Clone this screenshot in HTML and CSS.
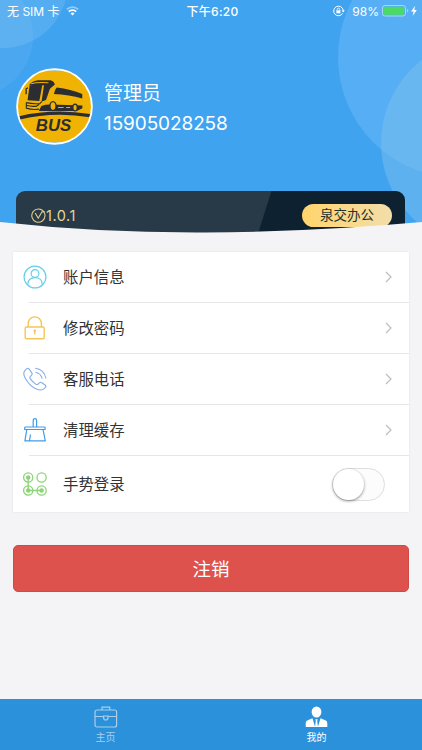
FILE: index.html
```html
<!DOCTYPE html>
<html lang="zh-CN">
<head>
<meta charset="utf-8">
<title>我的</title>
<link rel="stylesheet" href="styles.css">
</head>
<body>
<div class="app">
  <header class="hero">
    <svg class="hero-bg" viewBox="0 0 422 242" aria-hidden="true">
      <rect width="422" height="242" fill="#40a3f0"/>
      <circle cx="-28" cy="36" r="61" fill="#fff" fill-opacity=".06"/>
      <circle cx="3" cy="-17" r="65" fill="#fff" fill-opacity=".11"/>
      <circle cx="459" cy="57" r="121" fill="#5db1f6" fill-opacity=".75"/>
      <circle cx="486" cy="143" r="105" fill="#7dc1ef" fill-opacity=".48"/>
    </svg>
    <div class="status">
      <div class="status-left">
        <span>无 SIM 卡</span>
        <svg width="13" height="10" viewBox="0 0 13 10" fill="none" stroke="#fff" stroke-width="1.7"><path d="M.8 3.4a8.2 8.2 0 0 1 11.4 0" opacity=".45"/><path d="M2.8 5.6a5.3 5.3 0 0 1 7.4 0"/><path d="M6.5 9.5 4.5 7.4a2.8 2.8 0 0 1 4 0z" fill="#fff" stroke="none"/></svg>
      </div>
      <div class="status-time">下午6:20</div>
      <div class="status-right">
        <svg width="12" height="12" viewBox="0 0 12 12" fill="none" stroke="#fff"><path d="M9.6 8.4A4.8 4.8 0 1 1 10.2 5.2"/><path d="M8.6 5.2h3.2L10.2 7.4z" fill="#fff" stroke="none"/><rect x="3.4" y="5.3" width="4" height="3" fill="#fff" stroke="none"/><path d="M4.2 5.5V4.3a1.2 1.2 0 0 1 2.4 0v1.2" stroke-width=".8"/></svg>
        <span class="percent">98%</span>
        <svg width="36" height="12" viewBox="0 0 36 12"><rect x=".5" y=".5" width="23" height="10.5" rx="2.5" fill="none" stroke="#a6d6fa"/><rect x="1.7" y="1.7" width="20.6" height="8.1" rx="1.5" fill="#4cd964"/><path d="M25 4v3.5q1.3-.5 1.3-1.75T25 4z" fill="#a6d6fa"/><path d="M33.2.8 29 6.6h2.6l-1 4.5 4.2-6h-2.5z" fill="#fff"/></svg>
      </div>
    </div>
    <div class="profile">
      <svg class="avatar" viewBox="0 0 76 76">
        <defs><clipPath id="face"><circle cx="38" cy="38" r="36.2"/></clipPath></defs>
        <circle cx="38" cy="38" r="37" fill="#f0b203"/>
        <g clip-path="url(#face)">
          <path d="M18 0h40v2.8H18zM18 73.2h40V76H18z" fill="#9bd0ef"/>
          <path d="M3 47.5Q38 39.5 73 45.5v3.2Q38 42.5 3 51z" fill="#2b2d33"/>
          <path d="M13.4 17.2Q19.5 15.6 26 16.8L23 32.6 11.4 31.8z" fill="#2b2d33"/>
          <path d="M12.8 17Q16 12.6 22 12.2h12q3 .3 4.4 4.2L33.5 20.5 29.6 31.6l-4.4 1.6L27.6 17z" fill="#2b2d33"/>
          <path d="M15 15.6q6-2 17-1" fill="none" stroke="#f0b203" stroke-width="1.1"/>
          <path d="M37.4 25.6Q38 21.5 40.2 19.2 54 20.8 65.4 25.6V30q-13-3.6-28-4.4z" fill="#2b2d33"/>
          <path d="M11.8 19.5 10 20.5v5.5" fill="none" stroke="#2b2d33" stroke-width="1.3"/>
          <path d="M10.2 34.2q7 1.6 13.4.8l1.8-1.8M10.2 36.8q5 1.6 10 .8l3-2M10.2 34v5.6q6 2 12.6 1" fill="none" stroke="#2b2d33" stroke-width="1.1"/>
          <path d="M25 37.5q5-1.6 9-1.4L65.5 37v2.8L60 42.4H22.5z" fill="#2b2d33"/>
          <ellipse cx="36.5" cy="37.6" rx="3" ry="4.4" fill="#f0b203" stroke="#2b2d33" stroke-width="1.3"/>
          <ellipse cx="58.3" cy="39" rx="2.2" ry="3.3" fill="#f0b203" stroke="#2b2d33" stroke-width="1.2"/>
          <path d="M41.5 39h5.5M49.5 39h4" stroke="#f0b203"/>
          <text class="bus" x="19.5" y="62.2" textLength="35" lengthAdjust="spacingAndGlyphs">BUS</text>
        </g>
        <circle cx="38" cy="38" r="36.9" fill="none" stroke="#fff" stroke-width="1.8"/>
      </svg>
      <div class="identity">
        <div class="name">管理员</div>
        <div class="phone">15905028258</div>
      </div>
    </div>
    <div class="version-card">
      <div class="version">
        <svg width="15" height="15" viewBox="0 0 15 15" fill="none" stroke="#e2ce8c" stroke-width="1.1"><path d="M12.9 4A6.6 6.6 0 1 0 14 7.5q0-1.8-.8-3.2"/><path d="m4.2 5 3 5.2 3.8-6.4 2.8.1"/></svg>
        <span>1.0.1</span>
      </div>
      <div class="pill">泉交办公</div>
    </div>
    <svg class="wave" viewBox="0 0 422 20" aria-hidden="true"><path d="M0 0Q100 11 205 10.5T422 0V20H0z" fill="#f4f4f7"/></svg>
  </header>

  <main class="content">
    <section class="menu">
      <div class="row">
        <svg class="icon" viewBox="0 0 24 24" fill="none" stroke="#67cfe9" stroke-width="1.2"><circle cx="12" cy="12" r="10.9"/><circle cx="12" cy="8.5" r="3.9"/><path d="M5 19.5v-1.2c0-3.2 2.7-5.7 7-5.7s7 2.5 7 5.7v1.2"/></svg>
        <span class="label">账户信息</span><svg class="chevron" viewBox="0 0 7 12"><path d="m1 1 5 5-5 5"/></svg>
      </div>
      <div class="row">
        <svg class="icon" viewBox="0 0 24 24" fill="none" stroke="#f6c558" stroke-width="1.4"><rect x="2.2" y="11" width="19" height="11.8" rx="1.3"/><path d="M5.2 11V7.5a6.6 6.6 0 0 1 13.2 0V11"/><path d="M11.8 14.5v4" stroke-width="1.3"/><circle cx="11.8" cy="14.8" r="1.3" fill="#f6c558" stroke="none"/></svg>
        <span class="label">修改密码</span><svg class="chevron" viewBox="0 0 7 12"><path d="m1 1 5 5-5 5"/></svg>
      </div>
      <div class="row">
        <svg class="icon" viewBox="0 0 24 24" fill="none" stroke="#86aee8" stroke-width="1.1"><path d="M5.8 1.7Q4.8.9 3.8 1.7L1.8 3.6Q-.2 6 1.8 10.2C4.1 15 8.5 19.8 13.5 22.1q4.5 2 7.3-.2l1.6-1.6q1-1.2-.3-2.3l-3.3-2.3q-1.4-.9-2.5.2l-1.4 1.3q-1 .7-2.2-.1-3.4-2.3-5.5-5.5-.7-1.1.1-2.1l1.3-1.3q1-1 .2-2.3zM12.2 1.3q8.8.8 10.7 10.2M12.4 5.2q5.3.8 6.8 6.4"/></svg>
        <span class="label">客服电话</span><svg class="chevron" viewBox="0 0 7 12"><path d="m1 1 5 5-5 5"/></svg>
      </div>
      <div class="row">
        <svg class="icon" viewBox="0 0 24 24" fill="none" stroke="#409ce8" stroke-width="1.2" stroke-linejoin="round"><path d="M10.2 9V2.4q0-1.8 1.7-1.8t1.7 1.8V9M2.5 9h18.8q.8 0 .8.8v1.7H1.7V9.8q0-.8.8-.8zM3.8 11.5 1.9 22.8h20.4L20 11.5M7.5 16.5l-1 6"/></svg>
        <span class="label">清理缓存</span><svg class="chevron" viewBox="0 0 7 12"><path d="m1 1 5 5-5 5"/></svg>
      </div>
      <div class="row row-last">
        <svg class="icon" viewBox="0 0 24 24" fill="none" stroke="#8cd477" stroke-width="1.3"><circle cx="5.2" cy="5.5" r="4.6"/><circle cx="18.6" cy="5.5" r="4.6"/><circle cx="5.2" cy="18.5" r="4.6"/><circle cx="18.6" cy="18.5" r="4.6"/><path d="M5.2 5.5v13h13.4"/><g fill="#8cd477" stroke="none"><circle cx="5.2" cy="5.5" r="2.2"/><circle cx="5.2" cy="18.5" r="2.2"/><circle cx="18.6" cy="18.5" r="2.2"/></g></svg>
        <span class="label">手势登录</span><span class="switch"><span class="knob"></span></span>
      </div>
    </section>
    <button class="logout" type="button">注销</button>
  </main>

  <nav class="tabs">
    <div class="tab">
      <svg width="24" height="22" viewBox="0 0 24 22" fill="none" stroke="#a9cfea" stroke-width="1.2"><rect x="1" y="4" width="21.6" height="17" rx="2"/><path d="M8 4V1.2h7.8V4M1 10.5h8.6m4.4 0h8.6M9.6 10v1.8a2.2 2.2 0 0 0 4.4 0V10z"/></svg>
      <span>主页</span>
    </div>
    <div class="tab active">
      <svg width="24" height="22" viewBox="0 0 24 22" fill="#fff"><ellipse cx="11.5" cy="6" rx="4.9" ry="5.6"/><path d="M7.5 12.2 10.1 21H.7v-4q0-2 2-2.8zM15.5 12.2 12.9 21h9.4v-4q0-2-2-2.8zM10.3 13.3h2.4l-.5 1.8.8 5.9h-3l.8-5.9z"/></svg>
      <span>我的</span>
    </div>
  </nav>
</div>
</body>
</html>
```
FILE: styles.css
```css
* { box-sizing: border-box; }
body {
  margin: 0;
  background: #f4f4f7;
  color: #333;
  font-family: Inter, "Noto Sans CJK SC", sans-serif;
}
svg { display: block; flex: none; }
.app {
  display: flex;
  flex-direction: column;
  width: 422px;
  height: 750px;
  overflow: hidden;
}
.hero {
  position: relative;
  height: 242px;
  flex: none;
  color: #fff;
}
.hero-bg {
  position: absolute;
  inset: 0;
  width: 422px;
  height: 242px;
}
.status {
  position: relative;
  display: grid;
  grid-template-columns: 1fr auto 1fr;
  align-items: center;
  height: 22px;
  padding: 0 4px 0 7px;
  font-size: 12px;
  line-height: 22px;
}
.status-left, .status-right { display: flex; align-items: center; }
.status-left { gap: 6px; }
.status-left span, .status-time, .percent { padding-top: 1px; line-height: 21px; }
.status-time { font-weight: 500; letter-spacing: .3px; }
.status-right { justify-content: flex-end; }
.percent { margin: 0 3px 0 7px; }
.profile {
  position: relative;
  display: flex;
  align-items: flex-start;
  gap: 12px;
  padding: 46px 0 0 16px;
  height: 169px;
}
.avatar { width: 77px; height: 77px; }
.bus {
  font: italic bold 16px "Liberation Sans", sans-serif;
  fill: #2b2d33;
}
.identity { padding-top: 10px; margin-left: -1px; }
.name { font-size: 19px; line-height: 31px; }
.phone { font-size: 19px; line-height: 30px; letter-spacing: -.1px; }
.version-card {
  position: relative;
  display: flex;
  justify-content: space-between;
  align-items: flex-start;
  height: 49px;
  margin: 0 17px 0 16px;
  padding: 13px 13px 0 15px;
  border-radius: 9px 9px 0 0;
  background: linear-gradient(107.5deg, #283948 63%, #0e2130 63.3%);
}
.version {
  display: flex;
  align-items: center;
  height: 22px;
  color: #e9d591;
  font-size: 14.5px;
  letter-spacing: .5px;
}
.pill {
  width: 90px;
  height: 23px;
  border-radius: 12px;
  background: linear-gradient(90deg, #ffd56b, #f3deaa);
  color: #25302e;
  font-size: 13.5px;
  line-height: 23px;
  text-align: center;
}
.wave {
  position: absolute;
  left: 0;
  bottom: 0;
  width: 422px;
  height: 20px;
}
.content { flex: 1; padding: 10px 13px 0; }
.menu {
  height: 260px;
  background: #fff;
  box-shadow: 0 0 2px rgba(0, 0, 0, .09);
}
.row {
  display: flex;
  align-items: center;
  height: 51px;
  margin-left: 16px;
  padding: 0 17px 0 0;
  border-bottom: 1px solid #e6e6e9;
}
.row-last { height: 56px; padding-right: 24px; border-bottom: 0; }
.icon { width: 24px; height: 24px; margin-left: -6px; }
.label {
  flex: 1;
  margin-left: 16px;
  padding-top: 2px;
  font-size: 15.4px;
  line-height: 24px;
}
.chevron {
  width: 7px;
  height: 12px;
  fill: none;
  stroke: #bdbdbd;
  stroke-width: 1.2;
}
.switch {
  width: 53px;
  height: 33px;
  border: 1px solid #dedede;
  border-radius: 17px;
  background: #fcfcfc;
}
.knob {
  display: block;
  width: 31px;
  height: 31px;
  border-radius: 50%;
  background: #fff;
  box-shadow: 0 1px 3px rgba(0, 0, 0, .45);
}
.logout {
  display: block;
  width: 100%;
  height: 47px;
  margin-top: 33px;
  padding: 1px 0 0;
  border: 1px solid #d04b48;
  border-radius: 5px;
  background: #dd524d;
  color: #fff;
  font: 18.5px/44px Inter, "Noto Sans CJK SC", sans-serif;
}
.tabs {
  display: grid;
  grid-template-columns: 1fr 1fr;
  height: 51px;
  background: #2b91db;
}
.tab {
  display: flex;
  flex-direction: column;
  align-items: center;
  padding-top: 7px;
  color: #a9cfea;
  font-size: 10px;
  line-height: 16px;
}
.tab span { margin-top: 1px; }
.active { color: #fff; }
```
